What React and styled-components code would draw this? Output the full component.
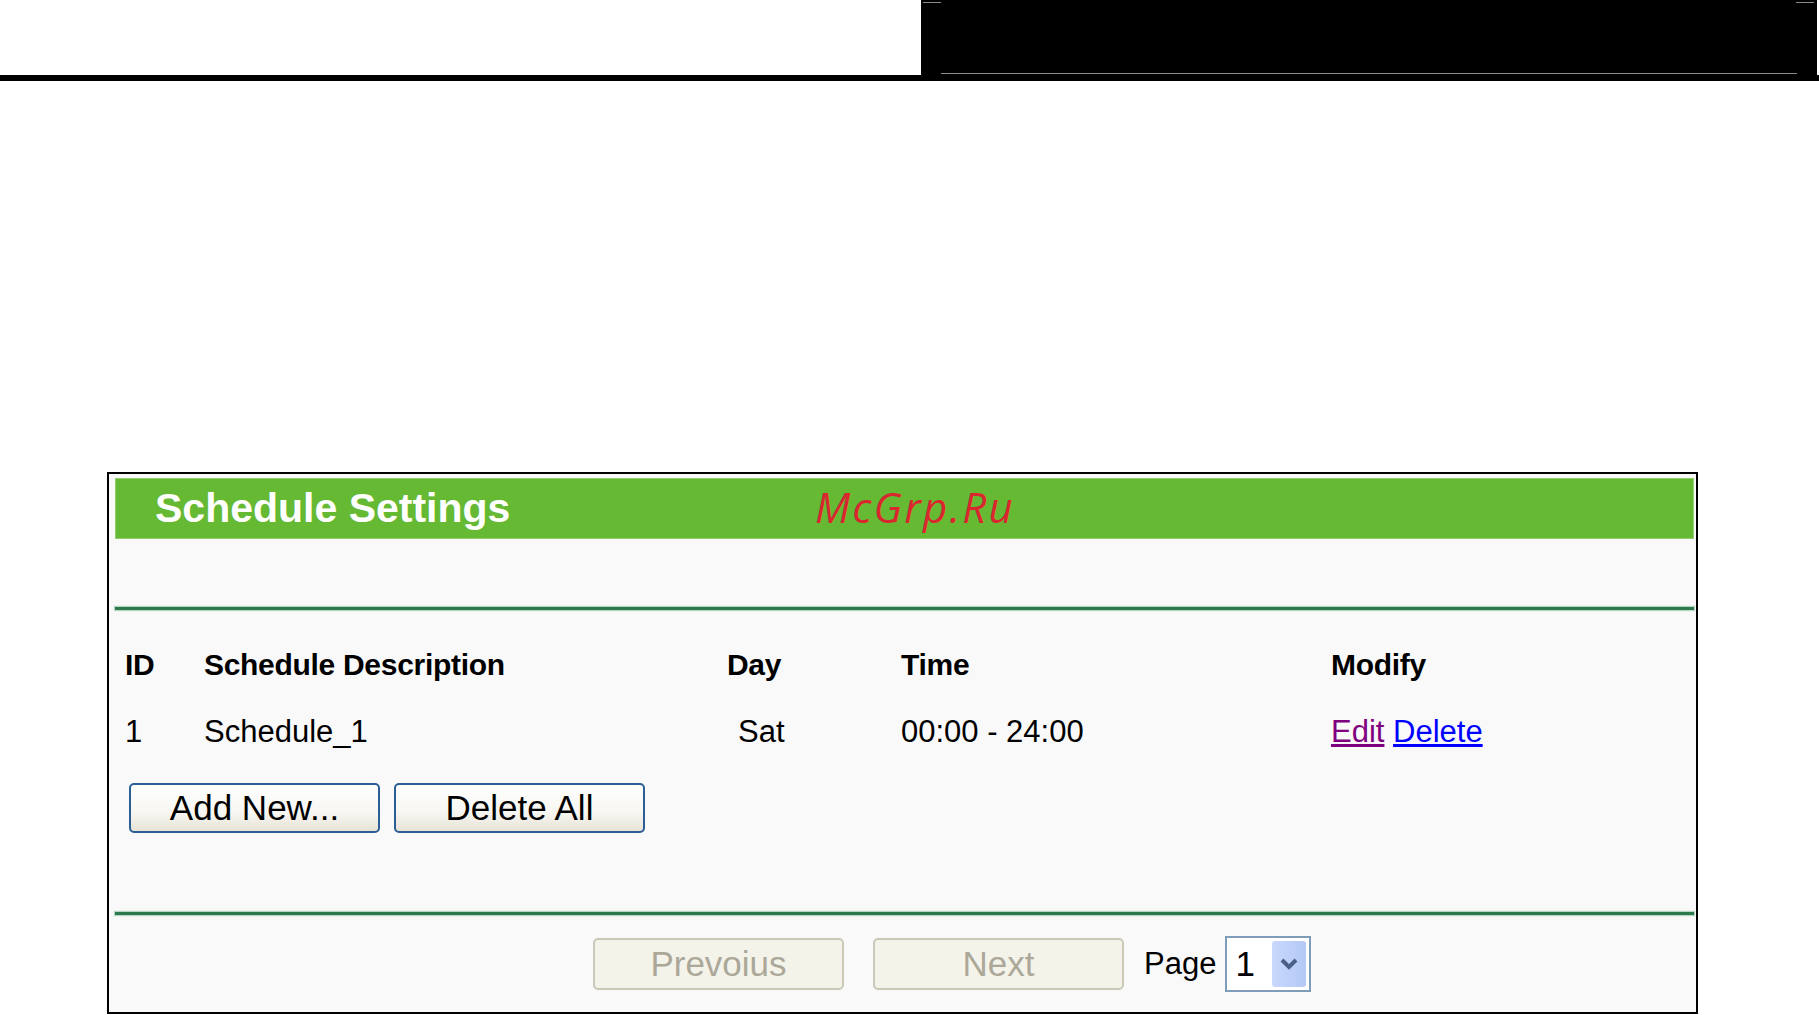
import React from 'react';
import styled, { createGlobalStyle } from 'styled-components';

const GlobalStyle = createGlobalStyle`
  html, body {
    margin: 0;
    padding: 0;
    background: #ffffff;
    font-family: "Liberation Sans", Arial, sans-serif;
  }
`;

const Page = styled.div`
  width: 1819px;
  height: 1015px;
  overflow: hidden;
`;

const TopBar = styled.div`
  display: flex;
  height: 75px;
`;

const Blank = styled.div`
  flex: 0 0 921px;
`;

const BlackBox = styled.div`
  position: relative;
  flex: 1;
  margin-right: 2px;
  background: #000;

  &::before {
    content: '';
    position: absolute;
    left: 2px;
    top: 2px;
    width: 18px;
    height: 1px;
    background: #8a8a8a;
    box-shadow: 873px 0 0 #8a8a8a;
  }

  &::after {
    content: '';
    position: absolute;
    left: 20px;
    right: 20px;
    bottom: 1px;
    height: 1px;
    background: #8a8a8a;
  }
`;

const Rule = styled.div`
  height: 6px;
  background: #000;
`;

const Panel = styled.div`
  box-sizing: border-box;
  width: 1591px;
  margin: 391px 0 0 107px;
  border: 2px solid #000;
  background: #f9f9f9;
  padding: 4px 2px 0 6px;
`;

const Header = styled.div`
  position: relative;
  height: 61px;
  background: #66b933;
  box-shadow: inset 0 0 0 1px #94cd6f;
  display: flex;
  align-items: center;
  padding-left: 40px;
`;

const Title = styled.h1`
  margin: 0;
  font-size: 41px;
  font-weight: bold;
  color: #fff;
  line-height: 1;
`;

const Watermark = styled.span`
  position: absolute;
  left: 700px;
  top: 50%;
  transform: translateY(-54%);
  font-family: "Open Sans", "Liberation Sans", sans-serif;
  font-style: italic;
  font-size: 42px;
  color: #d9262f;
  letter-spacing: 2.2px;
`;

const Spacer = styled.div`
  height: ${p => p.h}px;
`;

const Divider = styled.div`
  height: 3px;
  background: #2b7a4b;
  box-shadow: 0 0 1px 1px rgba(60, 150, 95, 0.35);
`;

const Section = styled.div`
  padding: 21px 0 79px 10px;
`;

const Row = styled.div`
  display: grid;
  grid-template-columns: 79px 523px 174px 430px 1fr;
  align-items: center;
  height: 67px;
  font-size: ${p => (p.head ? 30 : 31)}px;
  font-weight: ${p => (p.head ? 'bold' : 'normal')};
  color: #000;
  letter-spacing: ${p => (p.head ? '-0.3px' : '0')};
`;

const Cell = styled.div`
  padding-left: ${p => p.indent || 0}px;
  white-space: nowrap;
`;

const Link = styled.a`
  color: ${p => (p.visited ? '#800080' : '#0000ff')};
  text-decoration: underline;
  cursor: pointer;
`;

const Buttons = styled.div`
  display: flex;
  gap: 14px;
  margin: 18px 0 0 4px;
`;

const Button = styled.button`
  box-sizing: border-box;
  width: 251px;
  height: ${p => (p.disabled ? 52 : 50)}px;
  padding: 0;
  border-radius: 5px;
  font-family: "Liberation Sans", Arial, sans-serif;
  font-size: 35px;
  border: 2px solid ${p => (p.disabled ? '#cbc8b8' : '#2b5e94')};
  color: ${p => (p.disabled ? '#aca899' : '#000')};
  background: ${p =>
    p.disabled
      ? '#f4f3ea'
      : 'linear-gradient(#ffffff 0%, #f7f6f1 60%, #e6e3d6 100%)'};
`;

const Footer = styled.div`
  height: 97px;
  display: flex;
  align-items: center;
  padding-left: 478px;
`;

const Gap = styled.span`
  width: 29px;
`;

const PageLabel = styled.span`
  font-size: 31px;
  color: #000;
  margin: 0 9px 0 20px;
`;

const Select = styled.div`
  box-sizing: border-box;
  width: 86px;
  height: 56px;
  border: 2px solid #7f9db9;
  background: #fff;
  display: flex;
  align-items: center;
  justify-content: space-between;
  padding: 3px 3px 3px 8px;
  font-size: 35px;
`;

const Arrow = styled.div`
  width: 34px;
  height: 100%;
  border-radius: 3px;
  background: linear-gradient(90deg, #c9d8fb, #b4c9f7);
  display: flex;
  align-items: center;
  justify-content: center;
`;

export default function App() {
  return (
    <Page>
      <GlobalStyle />
      <TopBar>
        <Blank />
        <BlackBox />
      </TopBar>
      <Rule />
      <Panel>
        <Header>
          <Title>Schedule Settings</Title>
          <Watermark>McGrp.Ru</Watermark>
        </Header>
        <Spacer h={68} />
        <Divider />
        <Section>
          <Row head>
            <Cell>ID</Cell>
            <Cell>Schedule Description</Cell>
            <Cell>Day</Cell>
            <Cell>Time</Cell>
            <Cell>Modify</Cell>
          </Row>
          <Row>
            <Cell>1</Cell>
            <Cell>Schedule_1</Cell>
            <Cell indent={11}>Sat</Cell>
            <Cell>00:00 - 24:00</Cell>
            <Cell>
              <Link visited>Edit</Link> <Link>Delete</Link>
            </Cell>
          </Row>
          <Buttons>
            <Button>Add New...</Button>
            <Button>Delete All</Button>
          </Buttons>
        </Section>
        <Divider />
        <Footer>
          <Button disabled>Prevoius</Button>
          <Gap />
          <Button disabled>Next</Button>
          <PageLabel>Page</PageLabel>
          <Select>
            1
            <Arrow>
              <svg width="20" height="14" viewBox="0 0 20 14">
                <path d="M3 3 L10 10 L17 3" fill="none" stroke="#4a5f86" strokeWidth="4" />
              </svg>
            </Arrow>
          </Select>
        </Footer>
      </Panel>
    </Page>
  );
}
